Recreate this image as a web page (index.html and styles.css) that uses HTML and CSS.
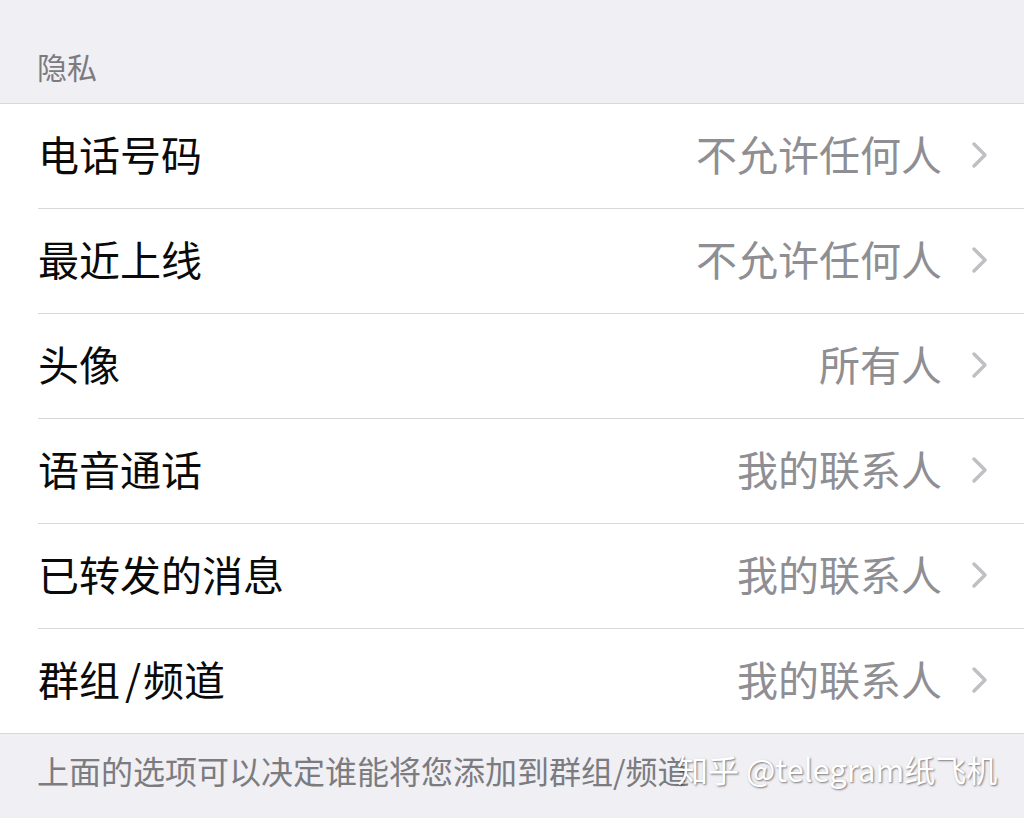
FILE: index.html
```html
<!DOCTYPE html>
<html lang="zh">
<head>
<meta charset="utf-8">
<link rel="stylesheet" href="styles.css">
</head>
<body>
<div class="page">
  <div class="section-title">隐私</div>
  <div class="list">
    <div class="row"><span class="label">电话号码</span><span class="value">不允许任何人</span><svg class="chev" viewBox="0 0 20 28"><path d="M4 3 L15 14 L4 25" /></svg></div>
    <div class="row"><span class="label">最近上线</span><span class="value">不允许任何人</span><svg class="chev" viewBox="0 0 20 28"><path d="M4 3 L15 14 L4 25" /></svg></div>
    <div class="row"><span class="label">头像</span><span class="value">所有人</span><svg class="chev" viewBox="0 0 20 28"><path d="M4 3 L15 14 L4 25" /></svg></div>
    <div class="row"><span class="label">语音通话</span><span class="value">我的联系人</span><svg class="chev" viewBox="0 0 20 28"><path d="M4 3 L15 14 L4 25" /></svg></div>
    <div class="row"><span class="label">已转发的消息</span><span class="value">我的联系人</span><svg class="chev" viewBox="0 0 20 28"><path d="M4 3 L15 14 L4 25" /></svg></div>
    <div class="row"><span class="label">群组<span class="slash">/</span>频道</span><span class="value">我的联系人</span><svg class="chev" viewBox="0 0 20 28"><path d="M4 3 L15 14 L4 25" /></svg></div>
  </div>
  <div class="footer">
    <span class="footer-text">上面的选项可以决定谁能将您添加到群组/频道</span>
    <span class="watermark">知乎 @telegram纸飞机</span>
  </div>
</div>
</body>
</html>
```
FILE: styles.css
```css
html, body {
  margin: 0;
  padding: 0;
  background: #efeff4;
}
body {
  font-family: "Noto Sans CJK SC", "Noto Sans", sans-serif;
  width: 1024px;
  height: 818px;
  overflow: hidden;
}
.page {
  display: flex;
  flex-direction: column;
}
.section-title {
  height: 104px;
  box-sizing: border-box;
  padding: 45px 0 0 37px;
  font-size: 30px;
  line-height: 42px;
  color: #7b7b80;
  border-bottom: 1px solid #d8d8dc;
}
.list {
  background: #ffffff;
  border-bottom: 1px solid #d8d8dc;
}
.row {
  height: 105px;
  display: flex;
  align-items: center;
  margin-left: 38px;
  padding-right: 34px;
  padding-bottom: 7px;
  box-sizing: border-box;
  border-bottom: 1px solid #d8d8dc;
}
.row:last-child {
  border-bottom: none;
  height: 104px;
}
.label {
  flex: 1;
  font-size: 41px;
  color: #0a0a0a;
  line-height: 50px;
  white-space: pre;
}
.slash {
  margin: 0 2px 0 5px;
}
.value {
  font-size: 41px;
  color: #8e8e93;
  line-height: 50px;
  margin-right: 28px;
}
.chev {
  width: 20px;
  height: 28px;
  margin-top: 4px;
  fill: none;
  stroke: #c0c0c4;
  stroke-width: 3.5;
  stroke-linecap: round;
  stroke-linejoin: round;
}
.footer {
  position: relative;
  padding: 14px 0 0 37px;
  height: 83px;
  box-sizing: border-box;
}
.footer-text {
  font-size: 32px;
  line-height: 44px;
  color: #7b7b80;
  white-space: nowrap;
}
.watermark {
  position: absolute;
  left: 677px;
  top: 13px;
  font-size: 31px;
  line-height: 44px;
  color: #ffffff;
  text-shadow: 1px 1px 2px rgba(0,0,0,0.5);
  white-space: nowrap;
}
```
